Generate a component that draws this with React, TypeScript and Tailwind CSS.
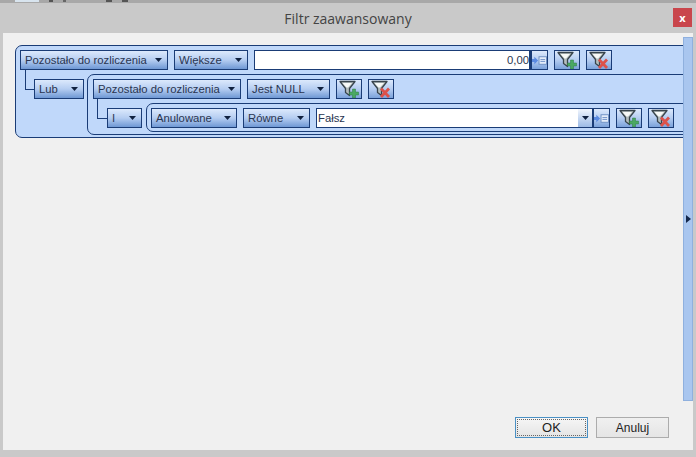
import React from "react";

const Caret = () => (
  <svg width="7" height="4" viewBox="0 0 7 4" className="shrink-0"><path d="M0 0h7L3.5 4z" fill="#10213f" /></svg>
);

const Drop = ({ w, label }: { w: string; label: string }) => (
  <div className={`${w} h-5 shrink-0 flex items-center justify-between pl-[4px] pr-[5px] border border-[#1a3c76] bg-gradient-to-b from-[#dce9fc] via-[#b5cdf1] to-[#6f98d4] text-[11.3px] text-[#2a3550] whitespace-nowrap`}>
    <span>{label}</span>
    <Caret />
  </div>
);

const Funnel = () => (
  <>
    <path d="M1 1.500 L16 1.500 L10.500 8.500 L10.500 15.500 L6.500 12.500 L6.500 8.500 Z" fill="#b4bebe" stroke="#39454d" strokeWidth="1.300" strokeLinejoin="round" />
    <path d="M3.500 3 L13 3 L9 7.500 L7.500 7.500 Z" fill="#f7f9f7" />
  </>
);

const IconBtn = ({ kind }: { kind: "add" | "del" }) => (
  <div className="w-[26px] h-5 shrink-0 flex items-center justify-center border border-[#1a3c76] bg-gradient-to-b from-[#dce9fc] via-[#b5cdf1] to-[#7ba2da]">
    <svg width="20" height="18" viewBox="0 0 20 18">
      <Funnel />
      {kind === "add" ? (
        <path d="M10.500 12h3V9h3v3h3v3h-3v3h-3v-3h-3z" fill="#4aa863" stroke="#2f7d45" strokeWidth="0.500" />
      ) : (
        <path d="M10 8.500 L18 17 M18 8.500 L10 17" stroke="#dc524b" strokeWidth="2.800" />
      )}
    </svg>
  </div>
);

const ValueBtn = () => (
  <div className="w-[18px] h-5 shrink-0 flex items-center justify-center border-l-2 border-y border-r border-[#1a3c76] bg-gradient-to-b from-[#dce9fc] via-[#b5cdf1] to-[#7ba2da]">
    <svg width="16" height="11" viewBox="0 0 16 11">
      <path d="M0 4h2.500V1.500L6.500 5.500 2.500 9.500V7H0z" fill="#5b8ae0" />
      <rect x="7.500" y="1.500" width="8" height="8" fill="#e4edfa" stroke="#6d8fc2" />
      <path d="M9 4.500h5M9 6.500h5" stroke="#6f90c6" />
    </svg>
  </div>
);

const Connector = ({ w }: { w: string }) => (
  <div className={`${w} h-[21px] -mt-[5px] shrink-0 border-l border-b border-[#1a3c76]`} />
);

const TopBit = ({ w, c }: { w: string; c: string }) => <span className={`${w} h-[2px] ${c}`} />;

export default function App() {
  return (
    <div className="w-[696px] h-[457px] flex flex-col bg-[#c9c9c9] overflow-hidden font-['Liberation_Sans',sans-serif]">
      <div className="h-[3px] shrink-0 bg-[#a8a8a8] flex items-start gap-[10px] pl-[15px]">
        <TopBit w="w-[24px]" c="bg-[#d8e4ee]" />
        <TopBit w="w-[4px]" c="bg-[#555555]" />
        <TopBit w="w-[3px]" c="bg-[#666666]" />
        <span className="w-[20px]" />
        <TopBit w="w-[6px]" c="bg-[#555555]" />
        <TopBit w="w-[6px]" c="bg-[#555555]" />
      </div>
      <div className="relative h-[30px] shrink-0 flex items-center justify-center text-[14px] text-[#444444] font-['Open_Sans',sans-serif]">
        <span>Filtr zaawansowany</span>
        <div className="absolute right-[4px] top-[5px] w-[19px] h-[19px] bg-[#c9464c] flex items-center justify-center text-white text-[11px] font-bold leading-none">x</div>
      </div>
      <div className="flex-1 min-h-0 ml-[3px] mr-[3px] mb-[7px] flex bg-[#f0f0f0]">
        <div className="flex-1 min-w-0 flex flex-col overflow-hidden">
          <div className="pl-[12px] pt-[12px]">
            <div className="w-[700px] rounded-[7px] border border-[#1a3c76] bg-[#c0d8fa] pl-[4px] pt-[4px] pb-[2px]">
              <div className="flex gap-[6px]">
                <Drop w="w-[148px]" label="Pozostało do rozliczenia" />
                <Drop w="w-[74px]" label="Większe" />
                <div className="flex shrink-0">
                  <div className="w-[276px] h-5 border border-[#1a3c76] bg-white flex items-center justify-end text-[11.3px] text-[#2a3550]">0,00</div>
                  <ValueBtn />
                </div>
                <IconBtn kind="add" />
                <IconBtn kind="del" />
              </div>
              <div className="flex mt-[4px] pl-[5px]">
                <Connector w="w-[9px]" />
                <div className="mt-[5px] shrink-0"><Drop w="w-[50px]" label="Lub" /></div>
                <div className="ml-[3px] w-[650px] shrink-0 rounded-[7px] border border-[#1a3c76] bg-[#c0d8fa] pl-[5px] pt-[4px] pb-[2px]">
                  <div className="flex gap-[6px]">
                    <Drop w="w-[148px]" label="Pozostało do rozliczenia" />
                    <Drop w="w-[83px]" label="Jest NULL" />
                    <IconBtn kind="add" />
                    <IconBtn kind="del" />
                  </div>
                  <div className="flex mt-[4px] pl-[4px]">
                    <Connector w="w-[10px]" />
                    <div className="mt-[5px] shrink-0"><Drop w="w-[35px]" label="I" /></div>
                    <div className="ml-[4px] w-[600px] shrink-0 rounded-[7px] border border-[#1a3c76] bg-[#c0d8fa] pl-[4px] pt-[4px] pb-[3px]">
                      <div className="flex gap-[6px]">
                        <Drop w="w-[86px]" label="Anulowane" />
                        <Drop w="w-[67px]" label="Równe" />
                        <div className="flex shrink-0">
                          <div className="w-[263px] h-5 border border-[#1a3c76] bg-white flex items-center pl-[1px] text-[11.3px] text-[#2a3550]">Fałsz</div>
                          <div className="w-[14px] h-5 -ml-px border-y border-[#1a3c76] flex items-center justify-center bg-gradient-to-b from-[#f2f6fd] to-[#9dbbe6]"><Caret /></div>
                          <ValueBtn />
                        </div>
                        <IconBtn kind="add" />
                        <IconBtn kind="del" />
                      </div>
                    </div>
                  </div>
                </div>
              </div>
            </div>
          </div>
          <div className="flex-1" />
          <div className="flex justify-end gap-[8px] pr-[14px] pb-[12px]">
            <div className="w-[73px] h-[21px] border border-[#4a90c4] bg-gradient-to-b from-[#f6f6f6] to-[#e4e4e4] p-[1px]">
              <div className="w-full h-full border border-dotted border-[#666666] flex items-center justify-center text-[13px] text-[#222]">OK</div>
            </div>
            <div className="w-[73px] h-[21px] border border-[#acacac] bg-gradient-to-b from-[#f0f0f0] to-[#e5e5e5] flex items-center justify-center text-[12px] text-[#222]">Anuluj</div>
          </div>
        </div>
        <div className="w-[10px] shrink-0 flex flex-col pt-[4px]">
          <div className="h-[364px] bg-[#a9c6ef] border border-[#8fb0de] flex items-center justify-center">
            <svg width="5" height="8" viewBox="0 0 5 8" className="-mt-[1px]"><path d="M0 0l5 4-5 4z" fill="#14284c" /></svg>
          </div>
        </div>
      </div>
    </div>
  );
}
